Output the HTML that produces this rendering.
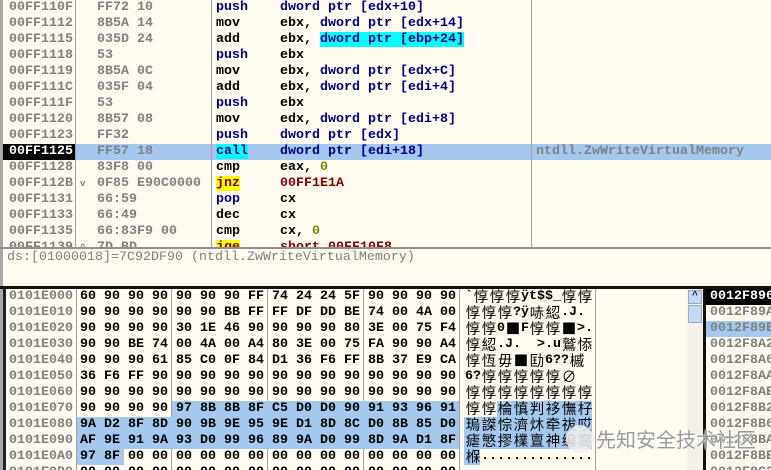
<!DOCTYPE html>
<html><head><meta charset="utf-8"><style>
*{margin:0;padding:0;box-sizing:border-box}
html,body{width:771px;height:470px;overflow:hidden}
body{background:#fffbf0;position:relative;font-family:"Liberation Mono",monospace;font-size:13.33px;font-weight:bold;}
.a{position:absolute;white-space:pre;line-height:16px;height:16px}
.g{color:#808080}.n{color:#000080}.k{color:#000}.o{color:#808000}.r{color:#800000}
.c{display:inline-block;width:16px;font-family:"Noto Sans CJK SC",sans-serif;font-weight:normal;font-size:14.5px;line-height:16px;vertical-align:top;text-align:center}
.v{position:absolute;width:1px;background:#a0a0a0}
</style></head><body>
<div style="position:absolute;left:0;top:0;width:3px;height:470px;background:#a8a8a8"></div>
<div style="position:absolute;left:3px;top:144px;width:768px;height:16px;background:#a6c8ef"></div>
<div style="position:absolute;left:3px;top:144px;width:72px;height:16px;background:#000"></div>
<div class="v" style="left:75px;top:0;height:248px"></div>
<div class="v" style="left:211px;top:0;height:248px"></div>
<div class="v" style="left:531px;top:0;height:248px"></div>
<div style="position:absolute;left:0;top:247px;width:771px;height:2px;background:#909090"></div>
<div id="d"></div>
<div class="a g" style="left:7px;top:250px;font-weight:normal">ds:[01000018]=7C92DF90 (ntdll.ZwWriteVirtualMemory)</div>
<div style="position:absolute;left:0;top:286px;width:771px;height:3px;background:#111"></div>
<div style="position:absolute;left:3px;top:289px;width:3px;height:181px;background:#222"></div>
<div style="position:absolute;left:687px;top:289px;width:16px;height:181px;background:#f4f1e8"></div>
<div style="position:absolute;left:688px;top:290px;width:14px;height:14px;background:#c8d8f4;border:1px solid #9ab;color:#225;font-size:10px;text-align:center;line-height:12px">^</div>
<div style="position:absolute;left:688px;top:305px;width:14px;height:18px;background:#c8d8f4;border:1px solid #9ab"></div>
<div style="position:absolute;left:703px;top:289px;width:3px;height:181px;background:#111"></div>
<div style="position:absolute;left:706px;top:321px;width:65px;height:16px;background:#a6c8ef"></div>
<div style="position:absolute;left:706px;top:289px;width:65px;height:16px;background:#000"></div>
<div id="m"></div>
<div style="position:absolute;left:566px;top:425px;width:28px;height:28px;border-radius:50%;background:rgba(240,240,240,.85)"></div>
<div class="a" style="left:596px;top:424px;height:30px;line-height:30px;font-family:'Noto Sans CJK SC',sans-serif;font-weight:normal;font-size:20px;color:#999;text-shadow:0 0 2px #fff,0 0 2px #fff">先知安全技术社区</div>
<script>
var D=[
["00FF110F","FF72 10",'<span class=n>push</span>','<span class=n>dword ptr [edx+10]</span>',''],
["00FF1112","8B5A 14",'<span class=k>mov</span>','<span class=k>ebx, </span><span class=n>dword ptr [edx+14]</span>',''],
["00FF1115","035D 24",'<span class=k>add</span>','<span class=k>ebx, </span><span class=n style="background:#00ffff">dword ptr [ebp+24]</span>',''],
["00FF1118","53",'<span class=n>push</span>','<span class=k>ebx</span>',''],
["00FF1119","8B5A 0C",'<span class=k>mov</span>','<span class=k>ebx, </span><span class=n>dword ptr [edx+C]</span>',''],
["00FF111C","035F 04",'<span class=k>add</span>','<span class=k>ebx, </span><span class=n>dword ptr [edi+4]</span>',''],
["00FF111F","53",'<span class=n>push</span>','<span class=k>ebx</span>',''],
["00FF1120","8B57 08",'<span class=k>mov</span>','<span class=k>edx, </span><span class=n>dword ptr [edi+8]</span>',''],
["00FF1123","FF32",'<span class=n>push</span>','<span class=n>dword ptr [edx]</span>',''],
["00FF1125","FF57 18",'<span class=n style="background:#00ffff">call</span>','<span class=n>dword ptr [edi+18]</span>','ntdll.ZwWriteVirtualMemory'],
["00FF1128","83F8 00",'<span class=k>cmp</span>','<span class=k>eax, </span><span class=o>0</span>',''],
["00FF112B","0F85 E90C0000",'<span class=r style="background:#ffff00">jnz</span>','<span class=r>00FF1E1A</span>',''],
["00FF1131","66:59",'<span class=n>pop</span>','<span class=k>cx</span>',''],
["00FF1133","66:49",'<span class=k>dec</span>','<span class=k>cx</span>',''],
["00FF1135","66:83F9 00",'<span class=k>cmp</span>','<span class=k>cx, </span><span class=o>0</span>',''],
["00FF1139","7D BD",'<span class=r style="background:#ffff00">jge</span>','<span class=r>short 00FF10F8</span>','']];
var h='';
D.forEach(function(r,i){var t=i*16;
h+='<div class="a" style="left:9px;top:'+t+'px;color:'+(i==9?'#fff':'#808080')+'">'+r[0]+'</div>';
h+='<div class="a g" style="left:97px;top:'+t+'px">'+r[1]+'</div>';
h+='<div class="a" style="left:216px;top:'+t+'px">'+r[2]+'</div>';
h+='<div class="a" style="left:280px;top:'+t+'px">'+r[3]+'</div>';
if(r[4])h+='<div class="a g" style="left:536px;top:'+t+'px">'+r[4]+'</div>';
if(i==11)h+='<div class="a g" style="left:80px;top:'+t+'px;font-size:9px">v</div>';
if(i==15)h+='<div class="a g" style="left:80px;top:'+t+'px;font-size:9px">^</div>';
});
document.getElementById('d').innerHTML='<div style="position:absolute;left:0;top:0;width:771px;height:247px;overflow:hidden">'+h+'</div>';
var M=["60 90 90 90 90 90 90 FF 74 24 24 5F 90 90 90 90","90 90 90 90 90 90 BB FF FF DF DD BE 74 00 4A 00","90 90 90 90 30 1E 46 90 90 90 90 80 3E 00 75 F4","90 90 BE 74 00 4A 00 A4 80 3E 00 75 FA 90 90 A4","90 90 90 61 85 C0 0F 84 D1 36 F6 FF 8B 37 E9 CA","36 F6 FF 90 90 90 90 90 90 90 90 90 90 90 90 90","90 90 90 90 90 90 90 90 90 90 90 90 90 90 90 90","90 90 90 90 97 8B 8B 8F C5 D0 D0 90 91 93 96 91","9A D2 8F 8D 90 9B 9E 95 9E D1 8D 8C D0 8B 85 D0","AF 9E 91 9A 93 D0 99 96 89 9A D0 99 8D 9A D1 8F","97 8F 00 00 00 00 00 00 00 00 00 00 00 00 00 00","00 00 00 00 00 00 00 00 00 00 00 00 00 00 00 00"];
var A=["`惇惇惇ÿt$$_惇惇","惇惇惇?ÿ哧綛.J.","惇惇0■F惇惇■>.u∅","惇綛.J.  >.u鷲悿","惇恆毋■劻6??槭","6?惇惇惇惇惇∅","惇惇惇惇惇惇惇惇","惇惇棆慎判袳憮杍","瑦謋悰濟炑牵祓哎","瘧慜摎檏亶神编窩","椺..............",""];
var S=["0012F896","0012F89A","0012F89E","0012F8A2","0012F8A6","0012F8AA","0012F8AE","0012F8B2","0012F8B6","0012F8BA","0012F8BE","0012F8C2"];
var g='';
[171,267,363,459,595].forEach(function(x){g+='<div class="v" style="left:'+x+'px;top:289px;height:181px"></div>'});
g+='<div class="v" style="left:76px;top:289px;height:181px"></div>';
g+='<div style="position:absolute;left:172px;top:401px;width:287px;height:16px;background:#a6c8ef"></div>';
g+='<div style="position:absolute;left:77px;top:417px;width:382px;height:32px;background:#a6c8ef"></div>';
g+='<div style="position:absolute;left:77px;top:449px;width:47px;height:16px;background:#a6c8ef"></div>';
g+='<div style="position:absolute;left:497px;top:401px;width:95px;height:16px;background:#a6c8ef"></div>';
g+='<div style="position:absolute;left:464px;top:417px;width:128px;height:32px;background:#a6c8ef"></div>';
g+='<div style="position:absolute;left:464px;top:449px;width:16px;height:16px;background:#a6c8ef"></div>';
M.forEach(function(r,i){var t=289+i*16;
g+='<div class="a g" style="left:9px;top:'+t+'px">0101E0'+(i.toString(16).toUpperCase())+'0</div>';
r.split(' ').forEach(function(b,j){g+='<div class="a k" style="left:'+(80+24*j)+'px;top:'+t+'px">'+b+'</div>'});
var s=A[i].replace(/[^\x20-\x7eÿ]/g,function(c){return '<span class=c>'+c+'</span>'});
g+='<div class="a k" style="left:465px;top:'+t+'px;width:128px;overflow:hidden">'+s+'</div>';
g+='<div class="a" style="left:710px;top:'+t+'px;color:'+(i==0?'#fff':'#808080')+'">'+S[i]+'</div>';
});
document.getElementById('m').innerHTML=g;
</script>
</body></html>
